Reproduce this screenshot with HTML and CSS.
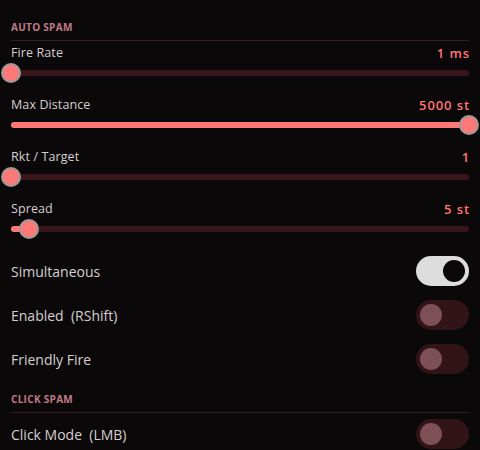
FILE: index.html
```html
<!DOCTYPE html>
<html lang="en">
<head>
    <meta charset="UTF-8">
    <title>Spam settings</title>
    <link rel="stylesheet" href="styles.css">
</head>
<body>
<div class="panel">
    <div class="title">AUTO SPAM</div>

    <div class="slider">
        <div class="slider-head"><span class="name">Fire Rate</span><span class="val">1 ms</span></div>
        <div class="track">
            <div class="fill" style="width:0%"></div>
            <div class="thumb" style="left:0%"></div>
        </div>
    </div>
    <div class="slider">
        <div class="slider-head"><span class="name">Max Distance</span><span class="val">5000 st</span></div>
        <div class="track">
            <div class="fill" style="width:100%"></div>
            <div class="thumb" style="left:100%"></div>
        </div>
    </div>
    <div class="slider">
        <div class="slider-head"><span class="name">Rkt / Target</span><span class="val">1</span></div>
        <div class="track">
            <div class="fill" style="width:0%"></div>
            <div class="thumb" style="left:0%"></div>
        </div>
    </div>
    <div class="slider">
        <div class="slider-head"><span class="name">Spread</span><span class="val">5 st</span></div>
        <div class="track">
            <div class="fill" style="width:4%"></div>
            <div class="thumb" style="left:4%"></div>
        </div>
    </div>

    <div class="toggles">
        <div class="row"><span>Simultaneous</span><div class="switch on"><div class="knob"></div></div></div>
        <div class="row"><span>Enabled&nbsp; (RShift)</span><div class="switch"><div class="knob"></div></div></div>
        <div class="row"><span>Friendly Fire</span><div class="switch"><div class="knob"></div></div></div>
    </div>

    <div class="title title2">CLICK SPAM</div>
    <div class="toggles toggles2">
        <div class="row"><span>Click Mode&nbsp; (LMB)</span><div class="switch"><div class="knob"></div></div></div>
    </div>
</div>
</body>
</html>
```

FILE: styles.css
```css
*{
    box-sizing: border-box;
}
html,body{
    margin:0;
    padding:0;
    background:#0b0809;
    height:100%;
    overflow:hidden;
}
body{
    font-family: "Open Sans", "Noto Sans", sans-serif;
    color:#d6cfd0;
}
.panel{
    padding:20px 11px 0 11px;
}
.title{
    font-size:10px;
    line-height:14px;
    font-weight:700;
    letter-spacing:0.3px;
    color:#c27a88;
    padding-bottom:6px;
    border-bottom:1px solid #3a1a22;
}
.title2{
    margin-top:18px;
}
.slider{
    margin-top:4px;
    margin-bottom:14px;
}
.slider-head{
    display:flex;
    justify-content:space-between;
    font-size:12.5px;
    line-height:16px;
    letter-spacing:0.1px;
}
.val{
    color:#ff7474;
    font-weight:600;
    font-size:13px;
    letter-spacing:0.9px;
    margin-right:-1px;
}
.track{
    position:relative;
    height:20px;
    margin-top:2px;
    display:flex;
    align-items:center;
}
.track:before{
    content:'';
    display:block;
    width:100%;
    height:6px;
    border-radius:3px;
    background:#3a161c;
}
.fill{
    position:absolute;
    left:0;
    top:7px;
    height:6px;
    border-radius:3px;
    background:#ff7878;
}
.thumb{
    position:absolute;
    top:0;
    width:20px;
    height:20px;
    margin-left:-10px;
    border-radius:50%;
    background:#ff7878;
    border:2px solid #9a9a9a;
}
.toggles{
    display:flex;
    flex-direction:column;
    gap:14px;
    margin-top:17px;
}
.slider + .toggles{
    margin-top:17px;
}
.toggles2{
    margin-top:6px;
}
.row{
    display:flex;
    justify-content:space-between;
    align-items:center;
    height:30px;
    font-size:14px;
}
.switch{
    width:53px;
    height:30px;
    border-radius:15px;
    background:#321418;
    padding:4px;
    display:flex;
}
.knob{
    width:22px;
    height:22px;
    border-radius:50%;
    background:#7d5058;
}
.switch.on{
    background:#dddddd;
    justify-content:flex-end;
}
.switch.on .knob{
    background:#0b0809;
}
```
